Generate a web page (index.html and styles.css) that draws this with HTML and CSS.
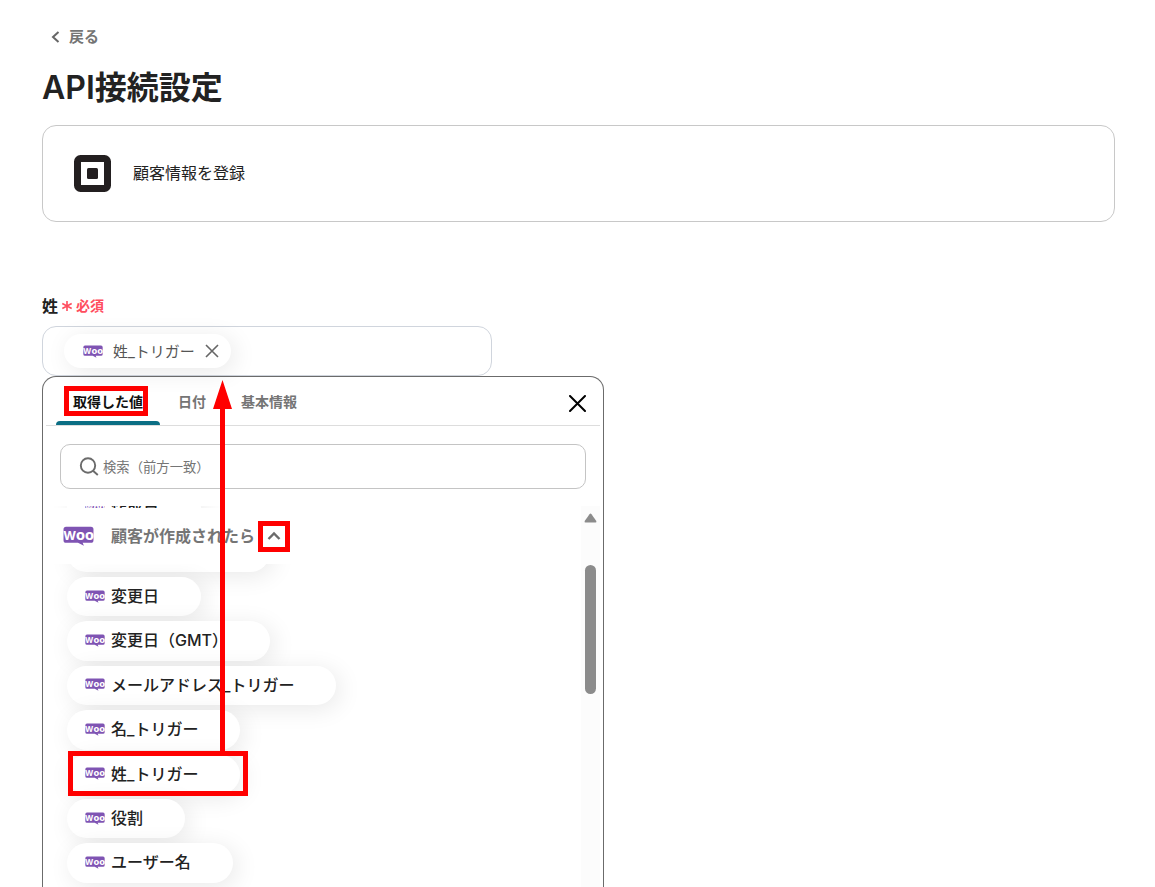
FILE: index.html
```
<!DOCTYPE html>
<html lang="ja">
<head>
  <meta charset="UTF-8">
  <meta name="viewport" content="width=device-width, initial-scale=1.0">
  <title>API接続設定</title>
  <link rel="stylesheet" href="styles.css">
</head>
<body>
  <!-- Shared icon -->
  <svg class="defs" aria-hidden="true">
    <symbol id="woo" viewBox="0 0 60 38">
      <path fill="#7f54b3" d="M6 1h48a5 5 0 0 1 5 5v21a5 5 0 0 1-5 5H38l2.500 6L29 32H6a5 5 0 0 1-5-5V6a5 5 0 0 1 5-5z"/>
      <text x="30" y="26" text-anchor="middle" class="woo-text">W<tspan class="woo-oo">oo</tspan></text>
    </symbol>
  </svg>

  <main class="page">
    <a href="#" class="back">
      <svg width="9" height="12" viewBox="0 0 9 12"><path d="M7.500 1L2 6l5.500 5" fill="none" stroke="#666" stroke-width="2"/></svg>
      戻る
    </a>

    <h1>API接続設定</h1>

    <div class="card">
      <svg width="37" height="37" viewBox="0 0 37 37">
        <rect x="3.500" y="3.500" width="30" height="30" rx="3" fill="none" stroke="#231f20" stroke-width="7"/>
        <rect x="13" y="13" width="11" height="11" rx="1.500" fill="#231f20"/>
      </svg>
      <span>顧客情報を登録</span>
    </div>

    <div class="field-label">
      <span class="name">姓</span>
      <span class="required">
        <svg width="12" height="12" viewBox="0 0 12 12"><path d="M6 1v10M1.300 3.500l9.400 5M10.700 3.500l-9.400 5" stroke="#ff4d5e" stroke-width="1.600"/></svg>
        必須
      </span>
    </div>

    <div class="field">
      <span class="chip">
        <svg class="woo-small"><use href="#woo"/></svg>
        <span>姓_トリガー</span>
        <button type="button" aria-label="削除">
          <svg width="14" height="14" viewBox="0 0 14 14"><path d="M1 1l12 12M13 1L1 13" stroke="#666" stroke-width="1.600"/></svg>
        </button>
      </span>
    </div>

    <section class="panel">
      <div class="tabs">
        <button type="button" class="tab active">取得した値</button>
        <button type="button" class="tab">日付</button>
        <button type="button" class="tab">基本情報</button>
        <button type="button" class="close" aria-label="閉じる">
          <svg width="17" height="17" viewBox="0 0 17 17"><path d="M1 1l15 15M16 1L1 16" stroke="#000" stroke-width="2" stroke-linecap="round"/></svg>
        </button>
      </div>

      <label class="search">
        <svg width="20" height="20" viewBox="0 0 20 20"><g fill="none" stroke="#6b6b6b" stroke-width="1.900"><circle cx="9" cy="8.500" r="7.200"/><path d="M14 13.800l4.800 4.200"/></g></svg>
        <input type="text" placeholder="検索（前方一致）" aria-label="検索">
      </label>

      <div class="list">
        <div class="group">
          <svg class="woo-large"><use href="#woo"/></svg>
          <span>顧客が作成されたら</span>
          <button type="button" aria-label="折りたたむ">
            <svg width="14" height="10" viewBox="0 0 14 10"><path d="M1.500 8L7 2.500 12.500 8" fill="none" stroke="#6b6b6b" stroke-width="2.400"/></svg>
          </button>
        </div>

        <ul class="items">
          <li><button type="button" class="item"><svg class="woo-small"><use href="#woo"/></svg>作成日</button></li>
          <li><button type="button" class="item"><svg class="woo-small"><use href="#woo"/></svg>作成日（GMT）</button></li>
          <li><button type="button" class="item"><svg class="woo-small"><use href="#woo"/></svg>変更日</button></li>
          <li><button type="button" class="item"><svg class="woo-small"><use href="#woo"/></svg>変更日（GMT）</button></li>
          <li><button type="button" class="item"><svg class="woo-small"><use href="#woo"/></svg>メールアドレス_トリガー</button></li>
          <li><button type="button" class="item"><svg class="woo-small"><use href="#woo"/></svg>名_トリガー</button></li>
          <li><button type="button" class="item"><svg class="woo-small"><use href="#woo"/></svg>姓_トリガー</button></li>
          <li><button type="button" class="item"><svg class="woo-small"><use href="#woo"/></svg>役割</button></li>
          <li><button type="button" class="item"><svg class="woo-small"><use href="#woo"/></svg>ユーザー名</button></li>
        </ul>

        <div class="scrollbar">
          <svg width="13" height="10" viewBox="0 0 13 10"><path d="M5.500 1.200q1-1.200 2 0l4.800 6.800q.5 1.500-.8 1.500h-10q-1.300 0-.8-1.500z" fill="#8b8b8b"/></svg>
          <div class="thumb"></div>
        </div>
      </div>

      <!-- Red marks over the panel -->
      <div class="mark mark-tab"></div>
      <div class="mark mark-toggle"></div>
      <div class="mark mark-item"></div>
      <svg class="arrow" width="21" height="372" viewBox="0 0 21 372"><path d="M10.500 0L20 29h-7v343H8V29H1z" fill="#f00"/></svg>
    </section>
  </main>
</body>
</html>
```
FILE: styles.css
```
* {
  margin: 0;
  padding: 0;
  box-sizing: border-box;
}

body {
  background-color: #fff;
  color: #222;
  font-family: Inter, "Noto Sans CJK JP", sans-serif;
  font-size: 16px;
  line-height: 1.4;
}

button {
  background: none;
  border: none;
  color: inherit;
  font-family: inherit;
  cursor: pointer;
}

svg {
  display: block;
  flex-shrink: 0;
}

.defs {
  position: absolute;
  width: 0;
  height: 0;
}

.woo-text {
  font-family: Inter, sans-serif;
  font-size: 24px;
  font-weight: 700;
  fill: #fff;
}

.woo-oo {
  font-family: "DejaVu Sans Condensed", "DejaVu Sans", sans-serif;
  font-size: 28px;
}

.woo-small {
  width: 20px;
  height: 13px;
}

.woo-large {
  width: 31px;
  height: 20px;
}

.page {
  display: flex;
  flex-direction: column;
  height: 100vh;
  padding: 26px 40px 0 42px;
  overflow: hidden;
}

.back {
  display: flex;
  align-items: center;
  gap: 9px;
  align-self: flex-start;
  padding-left: 9px;
  color: #757575;
  font-size: 15px;
  font-weight: 600;
  text-decoration: none;
}

h1 {
  margin-top: 19px;
  font-size: 32px;
  font-weight: 600;
}

.card {
  display: flex;
  align-items: center;
  gap: 22px;
  margin-top: 14px;
  padding: 29px 31px;
  border: 1px solid #c8c8c8;
  border-radius: 14px;
}

.field-label {
  display: flex;
  align-items: center;
  gap: 3px;
  margin-top: 73px;
  font-weight: 600;
}

.required {
  display: flex;
  align-items: center;
  gap: 3px;
  color: #ff4d5e;
  font-size: 14px;
}

.field {
  display: flex;
  align-items: center;
  flex-shrink: 0;
  width: 450px;
  height: 50px;
  margin-top: 9px;
  padding: 0 21px;
  border: 1px solid #d0d5dd;
  border-radius: 14px;
}

.chip {
  display: flex;
  align-items: center;
  gap: 10px;
  height: 34px;
  padding: 0 12px 0 19px;
  border-radius: 17px;
  box-shadow: 4px 4px 24px rgba(0, 0, 0, 0.09);
  color: #555;
  font-size: 15px;
}

/* Dropdown */
.panel {
  position: relative;
  display: flex;
  flex: 1;
  flex-direction: column;
  width: 562px;
  min-height: 0;
  border: 1px solid #6b6b6b;
  border-bottom: none;
  border-radius: 14px 14px 0 0;
}

.tabs {
  display: flex;
  gap: 1px;
  height: 49px;
  margin: 0 3px;
  padding: 0 14px 0 10px;
  border-bottom: 1px solid #ddd;
}

.tab {
  position: relative;
  padding: 0 17px;
  color: #757575;
  font-size: 14px;
  font-weight: 600;
}

.tab.active {
  color: #111;
}

.tab.active::after {
  content: "";
  position: absolute;
  left: 0;
  right: 0;
  bottom: 0;
  height: 4px;
  border-radius: 4px 4px 0 0;
  background-color: #0b6e84;
}

.close {
  margin-left: auto;
  padding-top: 4px;
}

.search {
  display: flex;
  align-items: center;
  gap: 4px;
  height: 45px;
  margin: 18px 17px 17px;
  padding: 0 18px;
  border: 1px solid #c4c4c4;
  border-radius: 10px;
}

.search input {
  flex: 1;
  border: none;
  outline: none;
  font-family: inherit;
}

.search input::placeholder {
  color: #757575;
}

.list {
  position: relative;
  display: flex;
  flex: 1;
  justify-content: space-between;
  min-height: 0;
  margin-right: 3px;
  overflow: hidden;
}

.group {
  position: absolute;
  top: 2px;
  left: 0;
  right: 19px;
  z-index: 1;
  display: flex;
  align-items: center;
  gap: 17px;
  height: 56px;
  padding-left: 20px;
  background-color: #fff;
  color: #757575;
  font-weight: 600;
}

.group button {
  margin-left: -5px;
}

.items {
  display: flex;
  flex-direction: column;
  gap: 5px;
  margin-top: -18px;
  padding-left: 24px;
  list-style: none;
}

.item {
  display: flex;
  align-items: center;
  gap: 6px;
  padding: 8px 42px 9px 18px;
  border-radius: 20px;
  background-color: #fff;
  box-shadow: 4px 4px 24px rgba(0, 0, 0, 0.09);
  font-size: 16px;
  font-weight: 500;
  line-height: 1.4;
}

.scrollbar {
  display: flex;
  flex-direction: column;
  align-items: center;
  gap: 42px;
  width: 19px;
  padding-top: 7px;
  background-color: #fcfcfc;
}

.thumb {
  width: 11px;
  height: 129px;
  border-radius: 6px;
  background-color: #8b8b8b;
}

.mark {
  position: absolute;
  z-index: 2;
  border: 5px solid #f00;
}

.mark-tab {
  top: 9px;
  left: 21px;
  width: 84px;
  height: 30px;
}

.mark-toggle {
  top: 144px;
  left: 215px;
  width: 32px;
  height: 31px;
}

.mark-item {
  top: 374px;
  left: 25px;
  width: 180px;
  height: 45px;
}

.arrow {
  position: absolute;
  top: 3px;
  left: 169px;
  z-index: 2;
}
```
